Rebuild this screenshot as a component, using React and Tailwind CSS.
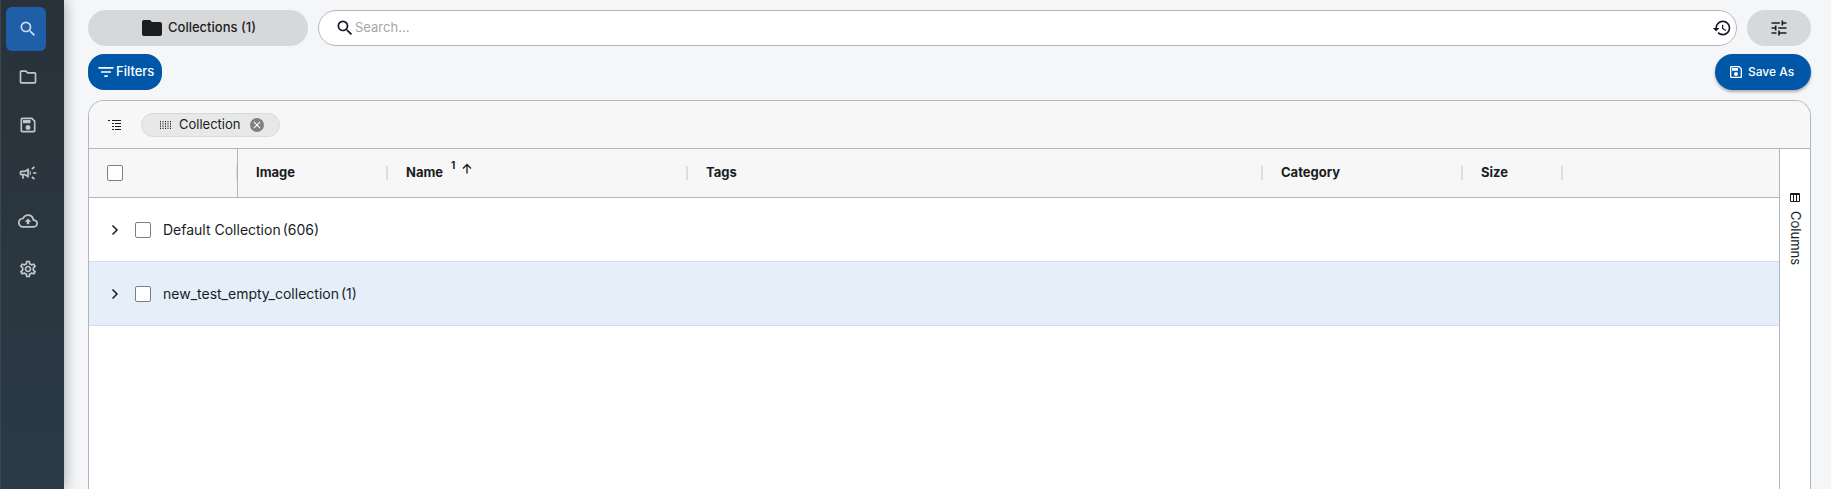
import {
  MdClose,
  MdFilterList,
  MdFolder,
  MdHistory,
  MdOutlineCampaign,
  MdOutlineCloudUpload,
  MdOutlineFolder,
  MdOutlineSave,
  MdOutlineSettings,
  MdSearch,
  MdTune,
} from "react-icons/md";

const navItems = [
  { label: "Search", icon: MdSearch, active: true },
  { label: "Collections", icon: MdOutlineFolder },
  { label: "Saved", icon: MdOutlineSave },
  { label: "Campaigns", icon: MdOutlineCampaign },
  { label: "Upload", icon: MdOutlineCloudUpload },
  { label: "Settings", icon: MdOutlineSettings },
];

const columns = [
  { label: "Image", width: "w-[150px]" },
  { label: "Name", width: "w-[300px]", sort: 1 },
  { label: "Tags", width: "w-[575px]" },
  { label: "Category", width: "w-[200px]" },
  { label: "Size", width: "w-[100px]" },
];

const groups = [
  { name: "Default Collection", count: 606 },
  { name: "new_test_empty_collection", count: 1, hovered: true },
];

function Sidebar() {
  return (
    <nav className="z-10 flex w-16 shrink-0 flex-col gap-1 border-l border-[#3b464e] bg-linear-to-b from-[#29323a] to-[#2b3a46] pt-[7px] pl-[5px] shadow-[0_0_14px_rgba(0,0,0,0.35)]">
      {navItems.map(({ label, icon: Icon, active }) => (
        <a
          key={label}
          href="#"
          aria-label={label}
          className={`flex h-11 w-10 items-center justify-center rounded-md pl-1 ${
            active ? "bg-[#1f5ea8] text-[#cfdcec]" : "text-[#c3c6c8]"
          }`}
        >
          <Icon size={20} />
        </a>
      ))}
    </nav>
  );
}

function Toolbar() {
  return (
    <div className="flex flex-col gap-2">
      <div className="flex gap-2.5">
        <button className="flex h-9 w-[220px] items-center justify-center gap-1 rounded-full bg-[#d7d8da] text-[13px] font-medium text-[#1b1d1f]">
          <MdFolder size={24} />
          Collections (1)
        </button>
        <div className="flex h-9 flex-1 items-center rounded-full border border-[#b4b6b9] bg-white pr-1 pl-4 text-[#111526]">
          <MdSearch size={20} />
          <input
            type="text"
            aria-label="Search"
            placeholder="Search..."
            className="min-w-0 flex-1 text-[13px] outline-none placeholder:text-[#a3a5aa]"
          />
          <button aria-label="Search history">
            <MdHistory size={20} />
          </button>
        </div>
        <button
          aria-label="Search options"
          className="flex h-9 w-16 items-center justify-center rounded-full bg-[#d7d8da] text-[#1b1d1f]"
        >
          <MdTune size={20} />
        </button>
      </div>
      <div className="flex items-center justify-between">
        <button className="flex h-9 items-center rounded-2xl bg-[#0057a8] px-2 text-[13px] font-medium text-white">
          <MdFilterList size={20} />
          Filters
        </button>
        <button className="flex h-9 w-24 items-center justify-center gap-1 rounded-full bg-[#0057a8] pr-1 text-xs font-medium text-white shadow-[0_2px_3px_rgba(0,0,0,0.3)]">
          <MdOutlineSave size={16} />
          Save As
        </button>
      </div>
    </div>
  );
}

function GroupIcon() {
  return (
    <svg width="13" height="12" viewBox="0 0 13 12" fill="none" stroke="currentColor" aria-hidden="true">
      <path d="M0 1.5h2M4 1.5h9M4 4.5h2M7 4.5h6M4 7.5h2M7 7.5h6M4 10.5h2M7 10.5h6" />
    </svg>
  );
}

function GripIcon() {
  return (
    <svg width="11" height="8" viewBox="0 0 11 8" fill="none" stroke="currentColor" aria-hidden="true">
      <path d="M.5 0v8M3 0v8M5.500 0v8M8 0v8M10.500 0v8" strokeDasharray="1.25 1" />
    </svg>
  );
}

function ColumnsIcon() {
  return (
    <svg width="10" height="10" viewBox="0 0 10 10" fill="none" stroke="currentColor" aria-hidden="true">
      <path d="M.5 .5h9v8h-9zM.5 1.5h9M3.500 1v8M6.500 1v8" />
    </svg>
  );
}

function Checkbox({ label }) {
  return (
    <input
      type="checkbox"
      aria-label={label}
      className="block size-4 appearance-none rounded-[2px] border border-[#7f7f7f] bg-white checked:bg-[#0057a8]"
    />
  );
}

function GroupBar() {
  return (
    <div className="flex h-12 items-center gap-5 border-b border-[#afb6c2] bg-[#f7f7f7] pl-[19px]">
      <GroupIcon />
      <div className="flex h-6 items-center rounded-full border border-[#d9d9d9] bg-[#e8e8e8] pr-[15px] pl-[18px]">
        <GripIcon />
        <span className="mr-2.5 ml-2 text-[13px]">Collection</span>
        <button
          aria-label="Remove Collection grouping"
          className="flex size-3.5 items-center justify-center rounded-full bg-[#808080] text-white"
        >
          <MdClose size={12} />
        </button>
      </div>
    </div>
  );
}

function Grid() {
  return (
    <table className="w-full table-fixed border-separate border-spacing-0 text-left">
      <thead>
        <tr className="h-[49px] bg-[#f7f7f7]">
          <th className="w-[149px] border-r border-b border-[#afb6c2] pl-[18px]">
            <div className="border-r border-[#d8dfeb]">
              <Checkbox label="Select all rows" />
            </div>
          </th>
          {columns.map(({ label, width, sort }) => (
            <th key={label} className={`${width} border-b border-[#afb6c2] pl-[18px] text-[13px] font-bold`}>
              <div className="flex h-3.5 items-center border-r-2 border-[#d8dfeb]">
                {label}
                {sort && (
                  <span className="mb-2 flex items-center gap-1 pl-2 text-[10px]">
                    <span className="mb-2">{sort}</span>
                    <svg width="16" height="16" viewBox="0 0 16 16" fill="none" stroke="currentColor" strokeWidth="1.3" aria-hidden="true">
                      <path d="M8 12.500v-9M4 7.500l4-4 4 4" />
                    </svg>
                  </span>
                )}
              </div>
            </th>
          ))}
          <th className="border-b border-[#afb6c2]" />
        </tr>
      </thead>
      <tbody>
        {groups.map(({ name, count, hovered }) => (
          <tr key={name} className={`h-16 ${hovered ? "bg-[#e5effa]" : "bg-white"}`}>
            <td colSpan={7} className="border-b border-[#d5dce8] pl-[18px]">
              <div className="flex items-center">
                <button aria-label={`Expand ${name}`} className="flex size-4 items-center justify-center">
                  <svg width="16" height="16" viewBox="0 0 16 16" fill="none" stroke="currentColor" strokeWidth="1.5" aria-hidden="true">
                    <path d="M5.500 3.500L10 8l-4.500 4.500" />
                  </svg>
                </button>
                <div className="mr-3 ml-3">
                  <Checkbox label={`Select ${name}`} />
                </div>
                <span className="mr-0.5 text-sm">{name}</span>
                <span className="text-sm">({count})</span>
              </div>
            </td>
          </tr>
        ))}
      </tbody>
    </table>
  );
}

export default function App() {
  return (
    <div className="flex h-screen overflow-hidden bg-[#f4f6f8] font-[Inter,sans-serif] text-[#181d1f]">
      <Sidebar />
      <main className="flex min-w-0 flex-1 flex-col gap-2.5 pt-2.5 pr-5 pl-6">
        <Toolbar />
        <div className="flex flex-1 flex-col overflow-hidden rounded-t-2xl border border-b-0 border-[#afb6c2] bg-white">
          <GroupBar />
          <div className="flex flex-1">
            <div className="min-w-0 flex-1">
              <Grid />
            </div>
            <div className="w-[31px] border-l border-[#afb6c2] pt-10">
              <button className="flex w-full items-center gap-2 pt-1 text-[13px] [writing-mode:vertical-rl]">
                <ColumnsIcon />
                Columns
              </button>
            </div>
          </div>
        </div>
      </main>
    </div>
  );
}
